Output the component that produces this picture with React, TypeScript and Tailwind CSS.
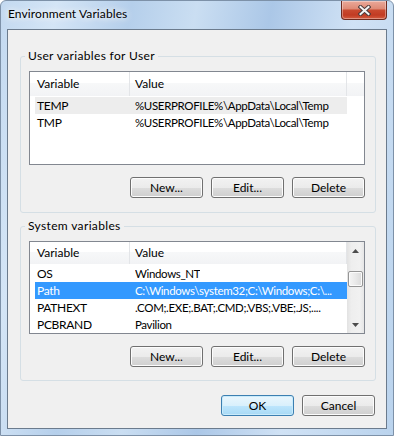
import React from "react";

type Row = { name: string; value: string; sel?: "gray" | "blue" };

const userRows: Row[] = [
  { name: "TEMP", value: "%USERPROFILE%\\AppData\\Local\\Temp", sel: "gray" },
  { name: "TMP", value: "%USERPROFILE%\\AppData\\Local\\Temp" },
];

const sysRows: Row[] = [
  { name: "OS", value: "Windows_NT" },
  { name: "Path", value: "C:\\Windows\\system32;C:\\Windows;C:\\...", sel: "blue" },
  { name: "PATHEXT", value: ".COM;.EXE;.BAT;.CMD;.VBS;.VBE;.JS;...." },
  { name: "PCBRAND", value: "Pavilion" },
];

function Btn({ label, primary }: { label: string; primary?: boolean }) {
  return (
    <div
      className={
        primary
          ? "w-[73px] h-[21px] rounded-[3px] border border-[#3c7fb1] bg-[linear-gradient(#eaf6fd_0%,#d9f0fc_50%,#bee6fd_50%,#a7d9f5_100%)] shadow-[inset_0_0_0_1px_#c9ebfb] flex items-center justify-center text-black"
          : "w-[73px] h-[21px] rounded-[3px] border border-[#707070] bg-[linear-gradient(#f2f2f2_0%,#ebebeb_50%,#dddddd_50%,#cfcfcf_100%)] shadow-[inset_0_0_0_1px_#fcfcfc] flex items-center justify-center text-black"
      }
    >
      {label}
    </div>
  );
}

function Arrow({ up }: { up?: boolean }) {
  return (
    <div className="h-[17px] flex items-center justify-center">
      <svg width="7" height="4" viewBox="0 0 7 4">
        {up ? (
          <polygon points="3.5,0 7,4 0,4" fill="#4d4d4d" />
        ) : (
          <polygon points="0,0 7,0 3.5,4" fill="#4d4d4d" />
        )}
      </svg>
    </div>
  );
}

function List({ rows, scroll }: { rows: Row[]; scroll?: boolean }) {
  return (
    <div
      className={
        scroll
          ? "ml-[8px] w-[336px] h-[93px] border border-[#828790] bg-white flex"
          : "ml-[8px] w-[336px] h-[94px] border border-[#828790] bg-white flex"
      }
    >
      <div className="flex-1 flex flex-col">
        <div className="h-[24px] flex bg-[linear-gradient(#ffffff_0%,#ffffff_45%,#f7f8f9_45%,#f2f3f5_100%)]">
          <div className="w-[100px] border-r border-[#e3e5e8] pl-[7px] flex items-center">Variable</div>
          <div className="w-[217px] border-r border-[#e3e5e8] pl-[5px] flex items-center">Value</div>
          <div className="flex-1" />
        </div>
        <div className="mt-[1px] flex flex-col">
          {rows.map((r) => (
            <div
              key={r.name}
              className={
                r.sel === "blue"
                  ? "ml-[5px] w-[312px] h-[17px] flex items-center bg-[#3399ff] text-white"
                  : r.sel === "gray"
                  ? "ml-[5px] w-[312px] h-[17px] flex items-center bg-[#ededed] text-black"
                  : "ml-[5px] w-[312px] h-[17px] flex items-center text-black"
              }
            >
              <span className="w-[100px] pl-[2px] shrink-0 tracking-[-0.3px]">{r.name}</span>
              <span className="whitespace-nowrap overflow-hidden text-[11.5px] tracking-[-0.35px]">{r.value}</span>
            </div>
          ))}
        </div>
      </div>
      {scroll && (
        <div className="w-[17px] flex flex-col bg-[linear-gradient(to_right,#e2e2e2,#eeeeee_25%,#f1f1f1_75%,#e6e6e6)]">
          <Arrow up />
          <div className="h-[12px]" />
          <div className="h-[16px] mx-[1px] rounded-[2px] border border-[#959595] bg-[linear-gradient(to_right,#f5f5f5,#e9e9e9_50%,#dadada)] shadow-[inset_0_0_0_1px_#fbfbfb]" />
          <div className="flex-1" />
          <Arrow />
        </div>
      )}
    </div>
  );
}

function Group({ title, last, children }: { title: string; last?: boolean; children: React.ReactNode }) {
  return (
    <fieldset
      className={
        last
          ? "mt-[5px] w-[356px] rounded-[3px] border border-[#d5dfe5] pt-[7px] pb-[13px]"
          : "w-[356px] rounded-[3px] border border-[#d5dfe5] pt-[7px] pb-[14px]"
      }
    >
      <legend className="ml-[4px] px-[3px] leading-[16px] tracking-[0.35px] text-black">{title}</legend>
      {children}
    </fieldset>
  );
}

export default function App() {
  return (
    <div className="w-[394px] h-[436px] font-['Lato',sans-serif] text-[12px] leading-[16px]">
      <div className="w-[394px] h-[436px] flex flex-col border border-[#7d91a8] rounded-t-[6px] bg-[linear-gradient(100deg,#c3d9f0_0%,#d4e5f6_12%,#b5cfeb_28%,#cadef2_42%,#abc7e7_58%,#d0e2f5_76%,#bad3ed_100%)]">
        <div className="h-[28px] flex justify-between">
          <div className="ml-[7px] pt-[5px] text-black tracking-[0.1px] [text-shadow:0_0_6px_#ffffff,0_0_10px_#ffffff]">
            Environment Variables
          </div>
          <div className="mr-[6px] w-[46px] h-[19px] rounded-b-[4px] border border-t-0 border-[#6e2b20] bg-[linear-gradient(#eaa99a_0%,#de8b77_42%,#c9492f_52%,#c23b23_78%,#d35c40_100%)] shadow-[inset_0_0_0_1px_rgba(255,255,255,0.35)] flex items-center justify-center">
            <svg width="13" height="11" viewBox="0 0 13 11">
              <path d="M2.5 2 L10.5 9 M10.5 2 L2.5 9" stroke="#4b3b3b" strokeWidth="4" strokeLinecap="square" />
              <path d="M2.5 2 L10.5 9 M10.5 2 L2.5 9" stroke="#f4f4f4" strokeWidth="2" strokeLinecap="square" />
            </svg>
          </div>
        </div>
        <div className="mx-[6px] h-[400px] border border-[#6b7b8d] bg-[#f0f0f0] flex flex-col pl-[12px] pr-[10px] pt-[18px]">
          <Group title="User variables for User">
            <List rows={userRows} />
            <div className="mt-[12px] mr-[10px] flex justify-end gap-[8px]">
              <Btn label="New..." />
              <Btn label="Edit..." />
              <Btn label="Delete" />
            </div>
          </Group>
          <Group title="System variables" last>
            <List rows={sysRows} scroll />
            <div className="mt-[12px] mr-[10px] flex justify-end gap-[8px]">
              <Btn label="New..." />
              <Btn label="Edit..." />
              <Btn label="Delete" />
            </div>
          </Group>
          <div className="mt-[14px] mr-[1px] flex justify-end gap-[8px]">
            <Btn label="OK" primary />
            <Btn label="Cancel" />
          </div>
        </div>
      </div>
    </div>
  );
}
